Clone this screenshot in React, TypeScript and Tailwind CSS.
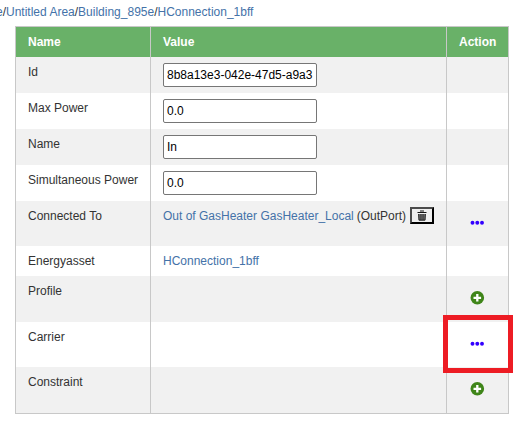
import type { ReactNode } from 'react';

const cols = 'grid grid-cols-[134px_296px_62px]';
const divider = 'border-l border-[#c8c8c8]';

function Row({ name, height, shaded, action, children }: {
  name: string;
  height: string;
  shaded?: boolean;
  action?: ReactNode;
  children?: ReactNode;
}) {
  return (
    <div className={`${cols} ${height} ${shaded ? 'bg-[#f1f1f1]' : 'bg-white'}`}>
      <div className="pl-3 pt-[7px]">{name}</div>
      <div className={`${divider} pl-3 pt-1.5`}>{children}</div>
      <div className={`${divider} relative flex justify-center`}>{action}</div>
    </div>
  );
}

function Field({ value }: { value: string }) {
  return (
    <input
      defaultValue={value}
      className="block h-6 w-[154px] rounded-[2px] border border-[#767676] bg-white pl-[3px] pr-0 text-[12px] text-black outline-none"
    />
  );
}

function Dots() {
  return (
    <svg className="mt-[15px] -ml-px h-[14px] w-[14px]" viewBox="0 0 14 14" fill="#3300ff">
      <circle cx="2.5" cy="6.8" r="1.95" />
      <circle cx="7.3" cy="6.8" r="1.95" />
      <circle cx="12" cy="6.8" r="1.95" />
    </svg>
  );
}

function Plus() {
  return (
    <svg className="mt-[15px] -ml-px h-[14px] w-[14px] overflow-visible" viewBox="0 0 14 14">
      <circle cx="7.3" cy="6.8" r="6.8" fill="#3f8519" />
      <path d="M7.3 3v7.6M3.5 6.8h7.6" stroke="white" strokeWidth="2.3" />
    </svg>
  );
}

function Trash() {
  return (
    <svg className="h-[11px] w-[10px]" viewBox="0 0 10 11" fill="none" stroke="#111">
      <path d="M3 1h4" />
      <path d="M.5 2.5h9" />
      <path d="M1 4h8l-.6 6.5H1.6z" fill="#777" stroke="none" />
      <path d="M1.7 4l.3 6M8.3 4L8 10M2 10.2h6" strokeWidth=".8" />
      <path d="M3.7 4v6M5 4v6M6.3 4v6" strokeWidth=".5" />
    </svg>
  );
}

export default function App() {
  return (
    <div className="h-[427px] w-[526px] overflow-hidden bg-white font-['Liberation_Sans',Arial,sans-serif] text-[12px] leading-4 text-[#333]">
      <div className="-ml-[4px] h-[26px] whitespace-nowrap pt-1 text-[#4472a8]">
        <span>e</span><span className="text-[#333]">/</span>
        <span>Untitled Area</span><span className="text-[#333]">/</span>
        <span>Building_895e</span><span className="text-[#333]">/</span>
        <span>HConnection_1bff</span>
      </div>
      <div className="ml-[15px] w-[494px] border border-[#c8c8c8]">
        <div className={`${cols} h-[30px] bg-[#69b168] font-bold leading-[30px] text-white`}>
          <div className="pl-3">Name</div>
          <div className={`${divider} pl-3`}>Value</div>
          <div className={`${divider} pl-3`}>Action</div>
        </div>
        <Row name="Id" height="h-9" shaded><Field value="8b8a13e3-042e-47d5-a9a3" /></Row>
        <Row name="Max Power" height="h-9"><Field value="0.0" /></Row>
        <Row name="Name" height="h-9" shaded><Field value="In" /></Row>
        <Row name="Simultaneous Power" height="h-9"><Field value="0.0" /></Row>
        <Row name="Connected To" height="h-[45px]" shaded action={<Dots />}>
          <div className="flex whitespace-nowrap pt-px">
            <span className="text-[#4472a8]">Out of GasHeater GasHeater_Local</span>
            <span className="ml-[3px]">(OutPort)</span>
            <button className="-mt-px ml-1 flex h-[17px] w-6 items-center justify-center border-2 border-b-black border-l-[#4c4c4c] border-r-black border-t-[#4c4c4c] bg-[#efefef]">
              <Trash />
            </button>
          </div>
        </Row>
        <Row name="Energyasset" height="h-[30px]">
          <div className="pt-px text-[#4472a8]">HConnection_1bff</div>
        </Row>
        <Row name="Profile" height="h-[46px]" shaded action={<Plus />} />
        <Row
          name="Carrier"
          height="h-[45px]"
          action={
            <>
              <Dots />
              <div className="absolute -left-1 -top-[7px] z-10 h-[58px] w-[70px] border-5 border-[#ed1c24]" />
            </>
          }
        />
        <Row name="Constraint" height="h-[46px]" shaded action={<Plus />} />
      </div>
    </div>
  );
}
